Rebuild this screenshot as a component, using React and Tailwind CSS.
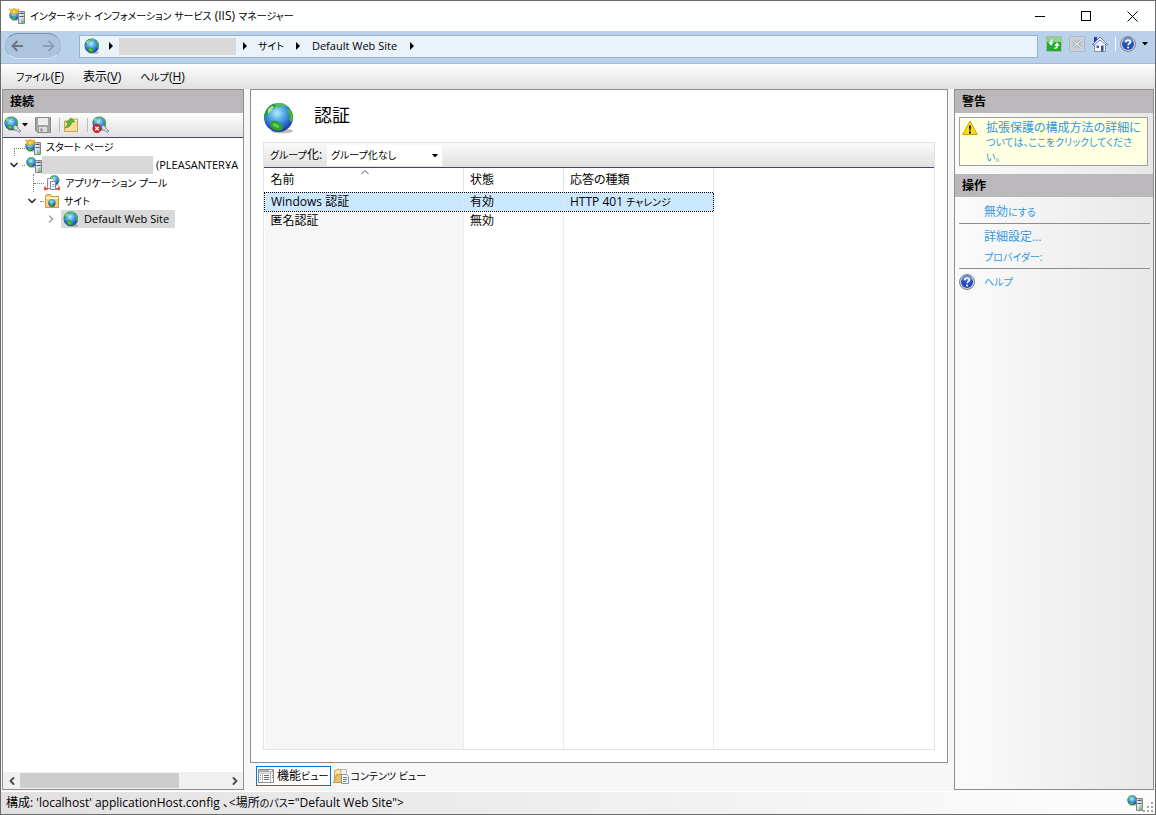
import React, { useId, useState } from 'react';
import { ChevronDown, ChevronLeft, ChevronRight } from 'lucide-react';

const Globe = (props) => {
  const id = useId();
  return (
    <svg viewBox="0 0 32 32" aria-hidden="true" {...props}>
      <defs>
        <radialGradient id={id} cx="0.45" cy="0.35" r="0.7">
          <stop offset="0" stopColor="#b4ebfc" />
          <stop offset="0.4" stopColor="#4ea6e6" />
          <stop offset="0.75" stopColor="#2558c4" />
          <stop offset="1" stopColor="#17268a" />
        </radialGradient>
      </defs>
      <ellipse cx="19" cy="29" rx="11" ry="2.5" fill="#00000040" />
      <circle cx="15.5" cy="15.5" r="14.5" fill={`url(#${id})`} />
      <path d="M1.500 15C1 9 5 4 11 1.500l2 2-2 3-4 2-1 3-3 3z" fill="#2f9c3c" />
      <path d="M5 7l4-3 2 1-3 4-3 3z" fill="#a5e69a" />
      <path d="M13 1.500l6-.5 4 2-2 2-3-1-2 2-3-1z" fill="#57b85c" />
      <path d="M7 20l4-1.500 4 1 3 3 2.500 2-1 3-4 1.500-5-1.500-3-3z" fill="#2fa12f" />
      <path d="M10 21l4 1 3 3-3 1-4-2z" fill="#62cf4c" />
      <path d="M24 7l3.500 1 2.500 5v5l-2 2-2-3 1-4-3-3z" fill="#43b53c" />
    </svg>
  );
};

const Tower = () => (
  <g>
    <path d="M9.500 3.500h6v12h-6z" fill="#b4bdc7" stroke="#7d8690" />
    <path d="M10 4h2v11h-2z" fill="#d6dce2" />
    <path d="M10.500 5.500h4M10.500 8.500h4" stroke="#4e565e" />
    <path d="M10.500 7h4M10.500 10h4" stroke="#fff" />
    <path d="M12.500 13h2v2h-2z" fill="#56d42c" />
  </g>
);

const ServerIcon = ({ star }) => (
  <svg className="w-4 h-4 shrink-0" viewBox="0 0 16 16" aria-hidden="true">
    <Globe x="0" y={star ? 2 : 0} width="11" height="11" />
    {star && <path d="M0 1l3 .5L5 0l2 1.500L10 1 9 3.500l1 2.500-3-1-2 2-1-2-3 1 1-2.500z" fill="#f7b62f" stroke="#d98c12" strokeWidth="0.500" />}
    {star && <path d="M4 3h2v1.500H4z" fill="#fff3b8" />}
    <Tower />
  </svg>
);

const PoolIcon = () => (
  <svg className="w-4 h-4 shrink-0" viewBox="0 0 16 16" aria-hidden="true">
    <Globe x="5" y="0" width="11" height="11" />
    <path d="M3.500 3.500h5l2 2v8h-7z" fill="#f7f9fc" stroke="#8b96a3" />
    <path d="M6.500 6.500h5v8h-5z" fill="#fff" stroke="#7b8795" />
    <path d="M8 9.500h2.500M8 11.500h2.500" stroke="#8fa6c8" />
    <path d="M1 11.500v3l3-1M15 11.500v3l-3-1" fill="none" stroke="#d8392b" strokeWidth="1.500" />
  </svg>
);

const SitesIcon = () => (
  <svg className="w-4 h-4 shrink-0" viewBox="0 0 16 16" aria-hidden="true">
    <path d="M1.500 3.500l1-2h4l1 2h7v11h-13z" fill="#f3d27a" stroke="#c99a3c" />
    <path d="M2 4h12v2H2z" fill="#fdf1c2" />
    <Globe x="4" y="6" width="8" height="8" />
  </svg>
);

const ConnectIcon = ({ error }) => (
  <svg className="w-[18px] h-[18px] shrink-0" viewBox="0 0 18 18" aria-hidden="true">
    <Globe x="0" y="0" width="15" height="15" />
    <path d="M9 11l2-2 2.500 1.500 1 2 2.500 2.500-1.500 1.500-3-2-2-.5z" fill="#ccd6df" stroke="#70808f" strokeWidth="0.800" />
    {error && (
      <>
        <circle cx="5" cy="12.5" r="4.2" fill="#d02b25" stroke="#8f1a1a" strokeWidth="0.600" />
        <path d="M3.300 10.800l3.400 3.400M6.700 10.800l-3.400 3.400" stroke="#fff" strokeWidth="1.400" />
      </>
    )}
  </svg>
);

const SaveIcon = () => (
  <svg className="w-4 h-4" viewBox="0 0 16 16" aria-hidden="true">
    <path d="M0.500 0.500h15v15H2.500l-2-2z" fill="#a3a3a3" stroke="#8a8a8a" />
    <path d="M3 1h10v7H3z" fill="#ececec" />
    <path d="M4 10h8v5H4z" fill="#dcdcdc" />
    <path d="M5.500 11.500h2v3h-2z" fill="#8a8a8a" />
  </svg>
);

const UpFolderIcon = () => (
  <svg className="w-4 h-4" viewBox="0 0 16 16" aria-hidden="true">
    <path d="M1.500 4h6l1-2h6v12.500h-13z" fill="#f7dd96" stroke="#c9a24a" />
    <path d="M9.500 3.500H14" stroke="#fff" />
    <path d="M2.500 10c1.500-1 2.500-2.500 2.500-4.500H3L8 1l4 3.500-3.500 1C8.500 8 6 10.500 2.500 11z" fill="#5cb82f" stroke="#3d8a1e" strokeWidth="0.600" />
  </svg>
);

const RefreshIcon = () => (
  <svg className="w-4 h-4" viewBox="0 0 16 16" aria-hidden="true">
    <rect x="0.500" y="0.500" width="15" height="15" rx="1" fill="#1fae2b" stroke="#a5bda8" />
    <path d="M1 1h14v5H1z" fill="#8cd68f" />
    <path d="M8 3C5 2.500 4 4 4 6H2l3 4 3-4H6c0-1 .5-1.700 2-1.500zM8 13c3 .5 4-1 4-3h2l-3-4-3 4h2c0 1-.5 1.700-2 1.500z" fill="#fff" stroke="#1b8a25" strokeWidth="0.300" />
  </svg>
);

const StopIcon = () => (
  <svg className="w-4 h-4" viewBox="0 0 16 16" aria-hidden="true">
    <rect x="0.500" y="0.500" width="15" height="15" rx="1" fill="#cbd2da" stroke="#b0b8c1" />
    <path d="M4 4.500l8 7M12 4.500l-8 7" stroke="#9ba4ae" strokeWidth="3" />
    <path d="M4 4.500l8 7M12 4.500l-8 7" stroke="#e4e8ec" strokeWidth="1.500" />
  </svg>
);

const HomeIcon = () => (
  <svg className="w-4 h-4" viewBox="0 0 16 16" aria-hidden="true">
    <path d="M2.500 7.500h11v8h-11z" fill="#f2f4fa" stroke="#8a92ad" />
    <path d="M2 1h3v5H2z" fill="#2636c8" />
    <path d="M2 8.500L8 3l6 5.500z" fill="#f2f4fa" />
    <path d="M0.500 8.500L8 1l7.500 7.500L14 9 8 4 2 9z" fill="#fff" stroke="#5568b8" strokeWidth="0.900" />
    <path d="M4.500 9.500h2.500v2.500H4.500z" fill="#4a5f9e" />
    <path d="M9 9.500h2.500v6H9z" fill="#3c5088" />
  </svg>
);

const HelpIcon = () => (
  <svg className="w-4 h-4 shrink-0" viewBox="0 0 16 16" aria-hidden="true">
    <circle cx="8" cy="8" r="7.5" fill="#d3d6de" stroke="#7e828d" />
    <circle cx="8" cy="8" r="6" fill="#2450b8" />
    <path d="M3 6a5 5 0 0 1 10 0c-3 1-7 1-10 0z" fill="#5d86da" />
    <path d="M5.800 6.200c0-3 4.600-2.800 4.600-.3 0 1.700-2.300 1.700-2.300 3.400" fill="none" stroke="#fff" strokeWidth="1.700" />
    <circle cx="8.100" cy="11.600" r="1" fill="#fff" />
  </svg>
);

const WarningIcon = () => (
  <svg className="w-4 h-4 shrink-0" viewBox="0 0 16 16" aria-hidden="true">
    <path d="M8 1l7.300 13.500H0.700z" fill="#fbdc1c" stroke="#c9a20c" strokeLinejoin="round" />
    <path d="M7 5.500h2l-.4 5H7.400z" fill="#111" />
    <path d="M7 11.500h2v2H7z" fill="#111" />
  </svg>
);

const FeaturesIcon = () => (
  <svg className="w-4 h-4" viewBox="0 0 16 16" aria-hidden="true">
    <path d="M0.500 1.500h15v13h-15z" fill="#fff" stroke="#8b8b8b" />
    <path d="M1 2h14v2H1z" fill="#a8b0b8" />
    <path d="M11 2.500h3" stroke="#fff" />
    <path d="M1 5h14M4.500 5v9M12.500 5v9" stroke="#b4b4b4" />
    <path d="M6 7.500h5M6 9.500h5M6 11.500h5" stroke="#6b6b6b" />
    <path d="M2 7.500h1M2 9.500h1M2 11.500h1M14 7.500h1M14 9.500h1" stroke="#8b8b8b" />
  </svg>
);

const ContentIcon = () => (
  <svg className="w-4 h-4" viewBox="0 0 16 16" aria-hidden="true">
    <path d="M5 1.500h8.500V8H5z" fill="#f4f4f4" stroke="#b8b8b8" />
    <path d="M1.500 2.500L6 1l2 2v9l-6.500 2z" fill="#f7e3ac" stroke="#c9a85c" />
    <path d="M0.500 14.500l3-8h8v8z" fill="#eec35a" stroke="#c29b48" />
    <path d="M8.500 6.500h5l2 2v7h-7z" fill="#fff" stroke="#8090a8" />
    <path d="M10 9.500h4M10 11.500h4M10 13.500h3" stroke="#4776c4" />
  </svg>
);

const NavArrow = ({ className }) => (
  <svg className={`w-3 h-3 ${className}`} viewBox="0 0 12 12" aria-hidden="true">
    <path d="M12 6H2M6.500 1L1.500 6l5 5" fill="none" stroke="currentColor" strokeWidth="2" />
  </svg>
);

const Triangle = () => (
  <svg className="w-1.5 h-2 shrink-0" viewBox="0 0 6 8" aria-hidden="true">
    <path d="M1 0l4 4-4 4z" fill="#000" />
  </svg>
);

const DownTriangle = () => (
  <svg className="w-1.5 h-1 shrink-0" viewBox="0 0 6 4" aria-hidden="true">
    <path d="M0 0h6L3 3.500z" fill="#000" />
  </svg>
);

const Divider = () => <span className="w-px h-3.5 bg-[#bdbdb4]"></span>;

// kana runs are set a little smaller than the kanji and latin around them
const Kana = ({ children }) => <span className="text-[10px] leading-none">{children}</span>;

const menus = [
  { label: <Kana>ファイル</Kana>, key: 'F' },
  { label: '表示', key: 'V' },
  { label: <Kana>ヘルプ</Kana>, key: 'H' },
];

const authRows = [
  { name: 'Windows 認証', status: '有効', response: <>HTTP 401 <Kana>チャレンジ</Kana></> },
  { name: '匿名認証', status: '無効', response: '' },
];

const TitleBar = () => (
  <header className="flex items-center h-[30px] bg-white pl-2 shrink-0">
    <ServerIcon star />
    <h1 className="ml-[5px] flex-1">
      <Kana>インターネット インフォメーション サービス</Kana> (IIS) <Kana>マネージャー</Kana>
    </h1>
    <button className="w-[46px] h-full flex items-center justify-center" aria-label="最小化">
      <span className="w-2.5 h-px bg-black"></span>
    </button>
    <button className="w-[46px] h-full flex items-center justify-center" aria-label="最大化">
      <span className="w-2.5 h-2.5 border border-black"></span>
    </button>
    <button className="w-[46px] h-full flex items-center justify-center" aria-label="閉じる">
      <svg className="w-[11px] h-[11px]" viewBox="0 0 11 11" aria-hidden="true">
        <path d="M0.500 0.500l10 10M10.500 0.500l-10 10" stroke="#000" />
      </svg>
    </button>
  </header>
);

const AddressBar = () => (
  <div className="flex items-center h-[33px] bg-[#b9d1ea] border-b border-[#a3bbd4] pl-1 pr-[7px] pb-0.5 shrink-0">
    <div className="flex items-center justify-between w-14 h-[26px] px-[5px] rounded-full border border-t-[#7d93ac] border-x-[#a0b6cf] border-b-[#d8e6f4] bg-[#adc4de] mr-[18px]">
      <button aria-label="戻る"><NavArrow className="text-[#6d7681]" /></button>
      <button aria-label="進む"><NavArrow className="text-[#8d9fb3] rotate-180" /></button>
    </div>
    <nav className="flex items-center flex-1 h-[23px] bg-[#eaf2fa] border border-[#96b2cc] pl-1 whitespace-nowrap">
      <Globe className="w-4 h-4 mr-2" />
      <Triangle />
      <button className="w-[117px] h-[17px] bg-[#d9d9d9] ml-[5px] mr-1.5" aria-label="サーバー"></button>
      <Triangle />
      <button className="ml-2.5 mr-[11px]"><Kana>サイト</Kana></button>
      <Triangle />
      <button className="text-[11px] ml-[11px] mr-3">Default Web Site</button>
      <Triangle />
    </nav>
    <div className="flex items-center ml-2 pb-1">
      <div className="flex gap-[7px]">
        <button aria-label="最新の情報に更新"><RefreshIcon /></button>
        <button aria-label="中止"><StopIcon /></button>
        <button aria-label="ホーム"><HomeIcon /></button>
      </div>
      <span className="w-px h-3.5 bg-white ml-[7px] mr-1"></span>
      <button className="flex items-center gap-1.5" aria-label="ヘルプ">
        <HelpIcon />
        <DownTriangle />
      </button>
    </div>
  </div>
);

const MenuBar = () => (
  <div className="flex items-center h-[25px] px-[15px] gap-[19px] bg-linear-to-b from-[#fdfdfd] to-[#e2e0e1] shrink-0">
    {menus.map((menu) => (
      <button key={menu.key}>
        {menu.label}(<span className="underline underline-offset-2">{menu.key}</span>)
      </button>
    ))}
  </div>
);

const PaneTitle = ({ children }) => (
  <h2 className="h-[23px] flex items-center px-[7px] bg-[#bbb8bb] font-bold shrink-0">{children}</h2>
);

const Dots = ({ className }) => <span className={`border-t border-dotted border-[#808080] shrink-0 ${className}`}></span>;

const ConnectionTree = () => (
  <ul className="flex-1 bg-white overflow-hidden whitespace-nowrap">
    <li className="flex items-center h-[18px] pl-[11px]">
      <span className="w-[11px] h-2 border-t border-l border-dotted border-[#808080] self-end shrink-0"></span>
      <ServerIcon star />
      <span className="ml-[5px]"><Kana>スタート ページ</Kana></span>
    </li>
    <li>
      <div className="flex items-center h-[18px] pl-[5px]">
        <ChevronDown className="w-3 h-3 text-[#333] shrink-0" strokeWidth={3.5} />
        <Dots className="w-[3px] ml-0.5 mr-px" />
        <ServerIcon />
        <span className="w-[111px] h-full bg-[#d9d9d9] shrink-0"></span>
        <span className="text-[11px] ml-[3px]">(PLEASANTER¥A</span>
      </div>
      <ul>
        <li className="flex items-center h-[18px] pl-[30px]">
          <span className="h-full border-l border-dotted border-[#808080]"></span>
          <Dots className="w-2.5" />
          <PoolIcon />
          <span className="ml-[5px]"><Kana>アプリケーション プール</Kana></span>
        </li>
        <li>
          <div className="flex items-center h-[18px] pl-[23px]">
            <ChevronDown className="w-3 h-3 text-[#333]" strokeWidth={3.5} />
            <Dots className="w-1 ml-0.5" />
            <SitesIcon />
            <span className="ml-1"><Kana>サイト</Kana></span>
          </div>
          <ul>
            <li className="flex items-center h-[18px] pl-[42px]">
              <ChevronRight className="w-3 h-3 text-[#a0a0a0] mr-1" strokeWidth={3} />
              <span className="flex items-center h-full bg-[#d9d9d9] pl-0.5 pr-1.5 text-[11px]">
                <Globe className="w-4 h-4 mr-[5px]" />
                Default Web Site
              </span>
            </li>
          </ul>
        </li>
      </ul>
    </li>
  </ul>
);

const ConnectionsPane = () => (
  <aside className="w-[242px] flex flex-col border border-[#8f8d8f] shrink-0">
    <PaneTitle>接続</PaneTitle>
    <div className="flex items-center h-[25px] pl-px bg-linear-to-b from-[#fdfdfd] to-[#e2e0e1] border-b border-[#45446a] shrink-0">
      <button className="flex items-center mr-[7px]" aria-label="接続">
        <ConnectIcon />
        <DownTriangle />
      </button>
      <button className="mr-2" aria-label="保存"><SaveIcon /></button>
      <Divider />
      <button className="ml-[3px] mr-2" aria-label="上へ"><UpFolderIcon /></button>
      <Divider />
      <button className="ml-1" aria-label="切断"><ConnectIcon error /></button>
    </div>
    <ConnectionTree />
    <div className="flex items-center h-[17px] bg-[#f0f0f0] shrink-0">
      <button className="w-[17px] flex justify-center" aria-label="左へスクロール">
        <ChevronLeft className="w-3 h-3 text-[#505050]" strokeWidth={4} />
      </button>
      <div className="flex-1 h-[15px]">
        <div className="w-[77%] h-full bg-[#cdcdcd]"></div>
      </div>
      <button className="w-[17px] flex justify-center" aria-label="右へスクロール">
        <ChevronRight className="w-3 h-3 text-[#505050]" strokeWidth={4} />
      </button>
    </div>
  </aside>
);

const AuthTable = () => {
  const [selected, setSelected] = useState(0);

  return (
    <div className="flex-1 min-h-0">
      <table className="table-fixed w-full h-full text-left">
        <colgroup>
          <col className="w-[199px] bg-[#f6f6f6]" />
          <col className="w-[100px]" />
          <col className="w-[150px]" />
          <col />
        </colgroup>
        <thead>
          <tr className="h-6 bg-white">
            <th className="relative font-normal px-1.5 border-r border-[#e2e2e2]">
              名前
              <svg className="absolute top-0.5 left-24 w-2 h-1" viewBox="0 0 8 4" aria-hidden="true">
                <path d="M0.500 4L4 .5 7.500 4" fill="none" stroke="#555" />
              </svg>
            </th>
            <th className="font-normal px-1.5 border-r border-[#e2e2e2]">状態</th>
            <th className="font-normal px-1.5 border-r border-[#e2e2e2]">応答の種類</th>
            <th></th>
          </tr>
        </thead>
        <tbody>
          {authRows.map((row, index) => {
            const active = index === selected;
            const edge = active ? 'bg-[#cce8ff] border-y border-y-black border-dotted' : '';
            return (
              <tr key={row.name} className="h-[19px]" onClick={() => setSelected(index)}>
                <td className={`px-1.5 border-r border-r-[#e5eef7] ${edge} ${active ? 'border-l border-l-black' : ''}`}>{row.name}</td>
                <td className={`px-1.5 border-r border-r-[#e5eef7] ${edge}`}>{row.status}</td>
                <td className={`px-1.5 border-r ${edge} ${active ? 'border-r-black' : 'border-r-[#e5eef7]'}`}>{row.response}</td>
                <td></td>
              </tr>
            );
          })}
          <tr>
            <td className="border-r border-[#e5eef7]"></td>
            <td className="border-r border-[#ececec]"></td>
            <td className="border-r border-[#ececec]"></td>
            <td></td>
          </tr>
        </tbody>
      </table>
    </div>
  );
};

const FeaturePane = () => (
  <main className="flex-1 min-w-0 flex flex-col">
    <section className="flex-1 min-h-0 flex flex-col bg-white border border-[#8f8d8f] px-3 pb-3">
      <div className="flex items-center h-[52px] shrink-0 pt-1">
        <Globe className="w-8 h-8" />
        <h2 className="ml-[19px] text-lg leading-6 pb-1.5">認証</h2>
      </div>
      <div className="flex-1 min-h-0 flex flex-col border border-[#e2e2e2]">
        <div className="flex items-center h-[25px] pl-1.5 bg-linear-to-b from-[#fafafa] to-[#e2e0e1] border-b border-[#45446a] shrink-0">
          <label htmlFor="grouping" className="w-[57px] whitespace-nowrap"><Kana>グループ</Kana>化:</label>
          <div className="relative w-[115px] h-[21px]">
            <select id="grouping" className="appearance-none w-full h-full pl-1 bg-white outline-none text-[10px]" defaultValue="none">
              <option value="none">グループ化なし</option>
              <option value="status">状態</option>
              <option value="response">応答の種類</option>
            </select>
            <span className="absolute right-1 top-2 flex pointer-events-none py-px"><DownTriangle /></span>
          </div>
        </div>
        <AuthTable />
      </div>
    </section>
    <div className="flex items-center h-[27px] pl-1.5 pb-px gap-0.5 shrink-0">
      <button className="flex items-center h-5 px-px gap-[3px] bg-white border border-[#0078d7]">
        <FeaturesIcon />
        <span>機能<Kana>ビュー</Kana></span>
      </button>
      <button className="flex items-center gap-0.5">
        <ContentIcon />
        <Kana>コンテンツ ビュー</Kana>
      </button>
    </div>
  </main>
);

const ActionsPane = () => (
  <aside className="w-[200px] flex flex-col border border-[#8f8d8f] bg-linear-to-r from-[#fbfbfb] to-[#e8e8e8] shrink-0">
    <PaneTitle>警告</PaneTitle>
    <a href="#protection" className="flex items-start m-1 mb-2 mr-[5px] p-0.5 pr-2 pb-0 gap-2 bg-[#ffffe1] border border-[#9f9f9f] text-[#3399dd] leading-[15px]">
      <WarningIcon />
      <span className="flex-1">
        <span className="block whitespace-nowrap">拡張保護の構成方法の詳細に</span>
        <span className="block text-[10px]">ついては、ここをクリックしてください。</span>
      </span>
    </a>
    <PaneTitle>操作</PaneTitle>
    <ul className="pl-1 pr-[3px] text-[#3399dd]">
      <li className="h-[27px] flex items-center pl-[25px] pt-1 border-b border-[#8f8d8f]">
        <a href="#disable">無効<Kana>にする</Kana></a>
      </li>
      <li className="h-[23px] flex items-center pl-[25px] pt-0.5"><a href="#advanced">詳細設定...</a></li>
      <li className="h-[22px] flex items-center pl-[25px] pb-0.5 border-b border-[#8f8d8f]">
        <a href="#providers"><Kana>プロバイダー:</Kana></a>
      </li>
      <li className="h-[25px] flex items-center">
        <a href="#help" className="flex items-center gap-[9px]"><HelpIcon /><Kana>ヘルプ</Kana></a>
      </li>
    </ul>
  </aside>
);

const StatusBar = () => (
  <footer className="flex items-center h-[23px] pl-[5px] pr-0.5 bg-linear-to-r from-[#e2e0e1] to-[#fdfdfd] border-t border-white shrink-0">
    <p className="flex-1">
      構成: 'localhost' applicationHost.config 、&lt;場所<Kana>のパス</Kana>="Default Web Site"&gt;
    </p>
    <ServerIcon />
    <svg className="w-2.5 h-2.5 self-end mb-0.5" viewBox="0 0 10 10" aria-hidden="true">
      <path d="M8 0h2v2H8zM4 4h2v2H4zM8 4h2v2H8zM0 8h2v2H0zM4 8h2v2H4zM8 8h2v2H8z" fill="#a3a3a3" />
    </svg>
  </footer>
);

const App = () => {
  return (
    <div className="h-screen flex flex-col overflow-hidden border border-[#6b6b6b] bg-[#f7f7f7] text-black text-xs leading-4 font-['Open_Sans','Noto_Sans_CJK_JP',sans-serif] [font-feature-settings:'palt']">
      <TitleBar />
      <AddressBar />
      <MenuBar />
      <div className="flex-1 min-h-0 flex gap-1.5 pl-px pr-px pb-px">
        <ConnectionsPane />
        <FeaturePane />
        <ActionsPane />
      </div>
      <StatusBar />
    </div>
  );
};

export default App;
